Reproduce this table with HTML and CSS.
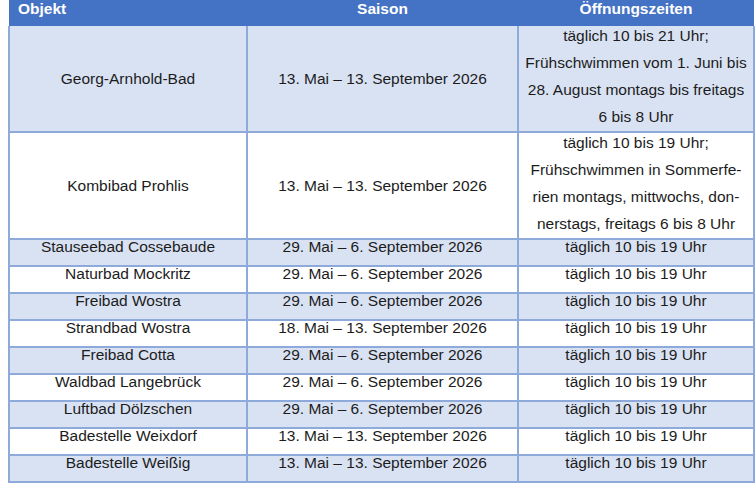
FILE: index.html
```html
<!DOCTYPE html>
<html lang="de">
<head>
<meta charset="utf-8">
<title>Bäder Öffnungszeiten</title>
<link rel="stylesheet" href="styles.css">
</head>
<body>
<table class="baeder">
  <colgroup>
    <col class="c1"><col class="c2"><col class="c3">
  </colgroup>
  <thead>
    <tr>
      <th class="left">Objekt</th>
      <th>Saison</th>
      <th>Öffnungszeiten</th>
    </tr>
  </thead>
  <tbody>
    <tr class="band tall">
      <td>Georg-Arnhold-Bad</td>
      <td>13. Mai – 13. September 2026</td>
      <td><div class="lines">täglich 10 bis 21 Uhr;<br>Frühschwimmen vom 1. Juni bis<br>28. August montags bis freitags<br>6 bis 8 Uhr</div></td>
    </tr>
    <tr class="tall">
      <td>Kombibad Prohlis</td>
      <td>13. Mai – 13. September 2026</td>
      <td><div class="lines">täglich 10 bis 19 Uhr;<br>Frühschwimmen in Sommerfe-<br>rien montags, mittwochs, don-<br>nerstags, freitags 6 bis 8 Uhr</div></td>
    </tr>
    <tr class="band">
      <td>Stauseebad Cossebaude</td>
      <td>29. Mai – 6. September 2026</td>
      <td>täglich 10 bis 19 Uhr</td>
    </tr>
    <tr>
      <td>Naturbad Mockritz</td>
      <td>29. Mai – 6. September 2026</td>
      <td>täglich 10 bis 19 Uhr</td>
    </tr>
    <tr class="band">
      <td>Freibad Wostra</td>
      <td>29. Mai – 6. September 2026</td>
      <td>täglich 10 bis 19 Uhr</td>
    </tr>
    <tr>
      <td>Strandbad Wostra</td>
      <td>18. Mai – 13. September 2026</td>
      <td>täglich 10 bis 19 Uhr</td>
    </tr>
    <tr class="band">
      <td>Freibad Cotta</td>
      <td>29. Mai – 6. September 2026</td>
      <td>täglich 10 bis 19 Uhr</td>
    </tr>
    <tr>
      <td>Waldbad Langebrück</td>
      <td>29. Mai – 6. September 2026</td>
      <td>täglich 10 bis 19 Uhr</td>
    </tr>
    <tr class="band">
      <td>Luftbad Dölzschen</td>
      <td>29. Mai – 6. September 2026</td>
      <td>täglich 10 bis 19 Uhr</td>
    </tr>
    <tr>
      <td>Badestelle Weixdorf</td>
      <td>13. Mai – 13. September 2026</td>
      <td>täglich 10 bis 19 Uhr</td>
    </tr>
    <tr class="band">
      <td>Badestelle Weißig</td>
      <td>13. Mai – 13. September 2026</td>
      <td>täglich 10 bis 19 Uhr</td>
    </tr>
  </tbody>
</table>
</body>
</html>
```

FILE: styles.css
```css
html, body {
  margin: 0;
  padding: 0;
  background: #ffffff;
}

body {
  font-family: "Liberation Sans", Arial, sans-serif;
  font-size: 15.5px;
  color: #1c1c1c;
}

.baeder {
  margin-left: 8px;
  border-collapse: collapse;
  table-layout: fixed;
  width: 745px;
}

.c1 { width: 238px; }
.c2 { width: 271px; }
.c3 { width: 236px; }

.baeder th {
  background: #4472c4;
  color: #ffffff;
  font-weight: bold;
  height: 26px;
  padding: 0 4px 7px;
  line-height: 18px;
  text-align: center;
  vertical-align: top;
  border: none;
  box-sizing: border-box;
}

.baeder th.left {
  text-align: left;
  padding-left: 9px;
}

.baeder td {
  border: 2px solid #8eaadb;
  padding: 0 2px;
  line-height: 14px;
  height: 25px;
  text-align: center;
  vertical-align: top;
  box-sizing: content-box;
}

.baeder thead + tbody tr:first-child td {
  border-top: none;
}

.baeder tr.tall td {
  height: 105px;
  padding: 0 2px;
  line-height: 20px;
  vertical-align: middle;
}

.baeder tr.tall td:last-child {
  vertical-align: top;
}

.lines {
  line-height: 27px;
  margin-top: -4px;
  height: 105px;
}

.baeder tr.band td {
  background: #d9e2f3;
}
```
